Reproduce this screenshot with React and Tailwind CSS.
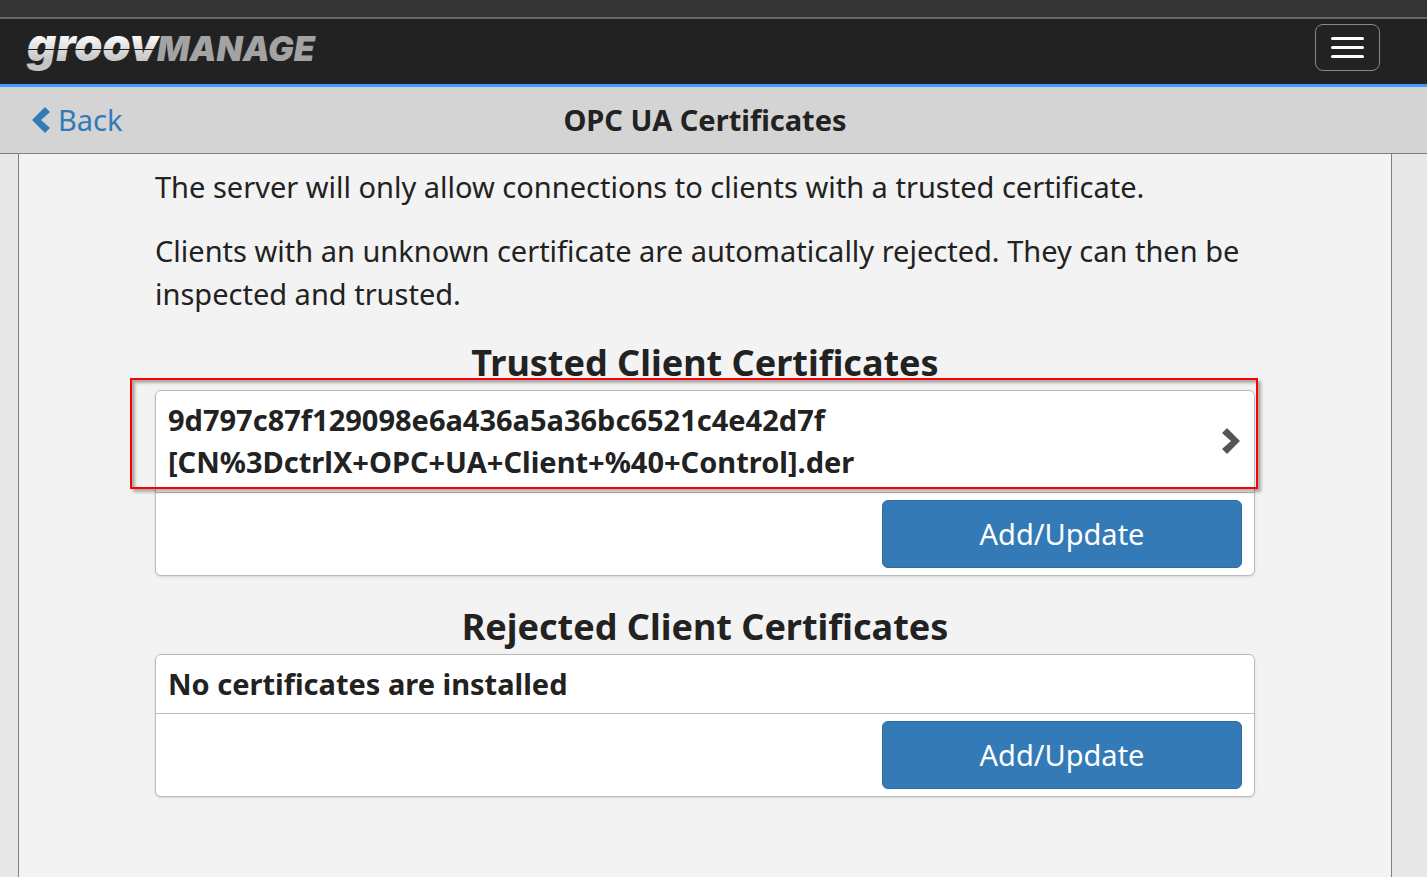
/* groov Manage: OPC UA client certificates */

function Logo() {
  return (
    <svg viewBox="0 -2 300 69" className="h-[69px] w-[300px]" role="img" aria-label="groov Manage">
      <defs>
        <linearGradient id="silver" x1="0" y1="0" x2="0" y2="1">
          <stop offset="0.3" stopColor="#ffffff" />
          <stop offset="0.8" stopColor="#c4c4c4" />
        </linearGradient>
      </defs>
      <g fontFamily="Inter, sans-serif" fontWeight="900" fontStyle="italic">
        <text x="3" y="42" fontSize="45" fill="url(#silver)">
          groov
        </text>
        <text x="133" y="42" fontSize="34" fill="#a3a3a3">
          MANAGE
        </text>
      </g>
      <path d="M4 30.5H132" stroke="#222" strokeWidth="1" />
    </svg>
  );
}

function Chevron({ direction, className }) {
  const points = direction === "left" ? "13,1 17,5 8,13 17,21 13,25 1,13" : "5,1 1,5 10,13 1,21 5,25 17,13";
  return (
    <svg viewBox="0 0 18 26" className={`h-[26px] w-[18px] shrink-0 ${className || ""}`} aria-hidden="true">
      <polygon points={points} fill="currentColor" stroke="currentColor" strokeWidth="1.4" strokeLinejoin="round" />
    </svg>
  );
}

function CertificateSection({ title, children }) {
  return (
    <section className="mb-[30px]">
      <h2 className="mb-1.5 text-center text-[36px] leading-[42px] font-bold">{title}</h2>
      <div className="rounded-md border border-[#bbb] bg-white shadow-sm">
        {children}
        <div className="flex justify-end border-t border-[#bbb] px-3 py-[7px]">
          <button
            type="button"
            className="w-[360px] rounded-md border border-[#2e6da4] bg-[#337ab7] py-3 text-[29px] leading-[42px] text-white"
          >
            Add/Update
          </button>
        </div>
      </div>
    </section>
  );
}

export default function App() {
  return (
    <div className="flex min-h-screen flex-col bg-[#e8e8e8] font-['Noto_Sans',sans-serif] text-[29px] leading-[43px] text-[#222]">
      <div className="h-[19px] border-b-2 border-[#666] bg-[#353535]" />

      <header className="flex h-[68px] items-center justify-between border-b-3 border-[#4499ff] bg-[#222] pr-[47px] pl-6">
        <Logo />
        <button
          type="button"
          aria-label="Menu"
          className="mb-2 flex h-[47px] w-[65px] flex-col items-center justify-center gap-1.5 rounded-lg border border-[#888]"
        >
          <span className="h-[3px] w-[33px] rounded-xs bg-white" />
          <span className="h-[3px] w-[33px] rounded-xs bg-white" />
          <span className="h-[3px] w-[33px] rounded-xs bg-white" />
        </button>
      </header>

      <div className="grid h-[67px] grid-cols-3 items-center border-b border-[#808080] bg-[#d4d4d4] pr-[17px]">
        <a href="#back" className="flex items-center gap-2 pl-8 leading-[42px] text-[#337ab7]">
          <Chevron direction="left" />
          Back
        </a>
        <h1 className="text-center leading-[42px] font-bold whitespace-nowrap">OPC UA Certificates</h1>
      </div>

      <div className="flex grow pr-[35px] pl-[18px]">
        <main className="grow border-x border-[#808080] bg-[#f3f3f3]">
          <div className="mx-auto max-w-[1100px] pt-[11px]">
            <p className="mb-[21px]">The server will only allow connections to clients with a trusted certificate.</p>
            <p className="mb-[27px]">
              Clients with an unknown certificate are automatically rejected. They can then be inspected and trusted.
            </p>

            <CertificateSection title="Trusted Client Certificates">
              <div className="relative">
                <button
                  type="button"
                  className="flex w-full items-center justify-between pt-2 pr-3.5 pb-[9px] pl-3 text-left leading-[42px] font-bold"
                >
                  <span>
                    9d797c87f129098e6a436a5a36bc6521c4e42d7f
                    <br />
                    [CN%3DctrlX+OPC+UA+Client+%40+Control].der
                  </span>
                  <Chevron direction="right" className="text-[#555]" />
                </button>
                {/* highlight around the trusted entry */}
                <div className="pointer-events-none absolute -top-[13px] -right-1 bottom-[3px] -left-[26px] border-2 border-[#f00] shadow-[3px_3px_3px_rgba(0,0,0,0.3),inset_3px_3px_3px_rgba(0,0,0,0.3)]" />
              </div>
            </CertificateSection>

            <CertificateSection title="Rejected Client Certificates">
              <p className="px-3 py-2 leading-[42px] font-bold">No certificates are installed</p>
            </CertificateSection>
          </div>
        </main>
      </div>
    </div>
  );
}
